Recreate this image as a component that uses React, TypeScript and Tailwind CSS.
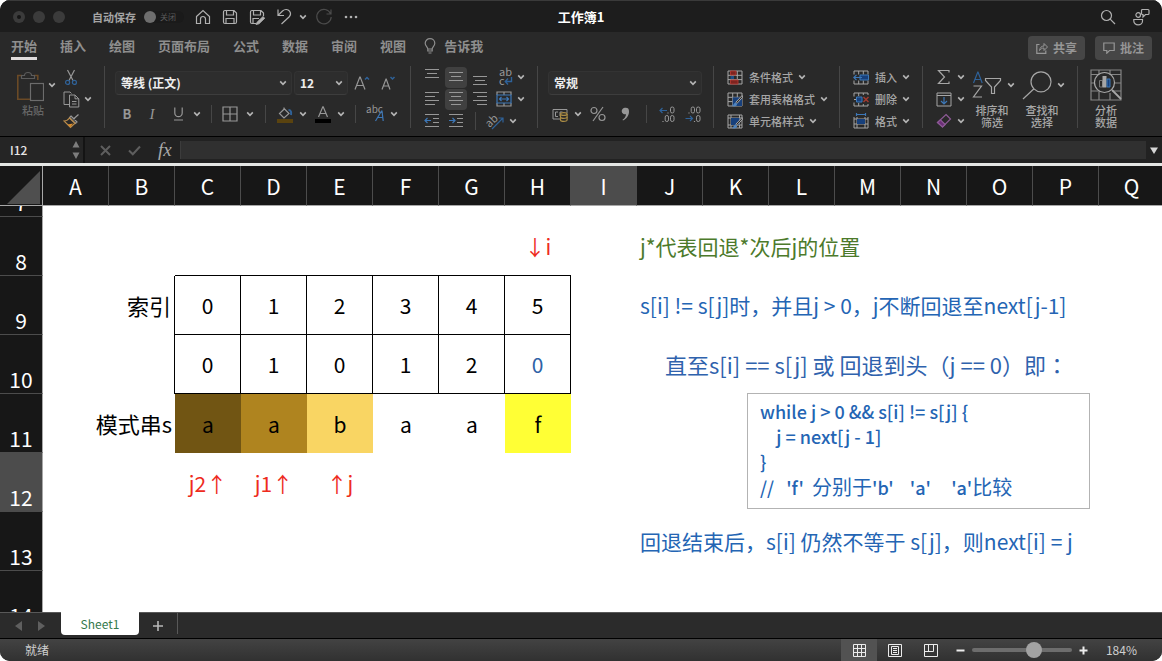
import React from "react";

type Kids = { children?: React.ReactNode; className?: string };

const BLUE = "#2f6299";

function Svg({ w, h, children, className = "" }: Kids & { w: number; h: number }) {
  return (
    <svg
      width={w}
      height={h}
      viewBox={`0 0 ${w} ${h}`}
      fill="none"
      stroke="currentColor"
      strokeWidth="1.2"
      aria-hidden="true"
      className={`shrink-0 ${className}`}
    >
      {children}
    </svg>
  );
}

function Chevron({ className = "" }: { className?: string }) {
  return (
    <Svg w={8} h={8} className={`text-[#b4b4b4] ${className}`}>
      <path d="M1.2 2.4 L4 5.4 L6.8 2.4" strokeWidth="1.6" />
    </Svg>
  );
}

function Tool({ label, children, className = "" }: Kids & { label: string }) {
  return (
    <button type="button" aria-label={label} className={`flex shrink-0 items-center justify-center ${className}`}>
      {children}
    </button>
  );
}

function Rule({ className = "" }: { className?: string }) {
  return <span className={`h-[62px] w-px shrink-0 bg-[#464646] ${className}`} />;
}

function ShortRule({ className = "" }: { className?: string }) {
  return <span className={`h-[18px] w-px shrink-0 bg-[#464646] ${className}`} />;
}

function Picker({ label, value, className = "" }: { label: string; value: string; className?: string }) {
  return (
    <label className={`relative flex h-6 shrink-0 items-center rounded border border-[#333] border-b-[#3d3d3d] bg-[#2d2d2d] ${className}`}>
      <select
        aria-label={label}
        defaultValue={value}
        className="h-full w-full appearance-none bg-transparent pl-[5px] text-[12px] leading-5 font-bold text-[#ededed] outline-none"
      >
        <option>{value}</option>
      </select>
      <Chevron className="pointer-events-none absolute right-1" />
    </label>
  );
}

/* ---------- title bar ---------- */

function TitleBar() {
  return (
    <header className="grid h-8 shrink-0 grid-cols-[1fr_auto_1fr] items-center border-t border-[#3a3a3a] bg-[#1d1d1d] text-[#b0b0b0]">
      <div className="flex items-center pl-[13px]">
        <div className="flex gap-2">
          <span className="flex size-3 items-center justify-center rounded-full bg-[#3b3b3b]">
            <span className="size-1 rounded-full bg-[#151515]" />
          </span>
          <span className="size-3 rounded-full bg-[#3b3b3b]" />
          <span className="size-3 rounded-full bg-[#3b3b3b]" />
        </div>
        <button type="button" role="switch" aria-checked="false" className="ml-[27px] flex items-center gap-2">
          <span className="text-[11px] leading-4 font-bold text-[#a4a4a4]">自动保存</span>
          <span className="flex items-center gap-1 rounded-full bg-[#1a1a1a] pr-2 text-[8px] leading-3 text-[#5a5a5a]">
            <span className="size-3 rounded-full bg-[#6e6e6e]" />
            关闭
          </span>
        </button>
        <div className="ml-[11px] flex items-center gap-[11px]">
          <Tool label="主页">
            <Svg w={16} h={16}>
              <path d="M1.5 7.5 L8 1.5 L14.5 7.5 V14.5 H10.5 V10 a2.5 2.5 0 0 0 -5 0 V14.5 H1.5 Z" />
            </Svg>
          </Tool>
          <Tool label="保存">
            <Svg w={16} h={16}>
              <path d="M1.5 3 a1.5 1.5 0 0 1 1.5 -1.5 H12 L14.5 4 V13 a1.5 1.5 0 0 1 -1.5 1.5 H3 A1.5 1.5 0 0 1 1.5 13 Z M4.5 1.5 V6 H11.5 V1.5 M4 14.5 V9.5 H12 V14.5" />
            </Svg>
          </Tool>
          <Tool label="另存为">
            <Svg w={16} h={16}>
              <path d="M7 14.5 H3 A1.5 1.5 0 0 1 1.5 13 V3 a1.5 1.5 0 0 1 1.5 -1.5 H12 L14.5 4 V7 M4.5 1.5 V6 H11.5 V1.5 M4 14.5 V9.5 H10" />
              <path d="M14 7.5 L8.2 13 L7 15.6 L10 14.8 L15.8 9.2 Z" fill="currentColor" strokeWidth="0.8" />
            </Svg>
          </Tool>
          <Tool label="撤消">
            <Svg w={16} h={17}>
              <path d="M2 1.5 V7.5 H8 M2.2 7.2 L6.5 3 C9 0.8 12 1.2 13.5 3.2 C15 5.2 14.5 7.5 13 9 L5.5 16" />
            </Svg>
          </Tool>
        </div>
        <Chevron className="ml-[7px]" />
        <Tool label="恢复" className="ml-2 text-[#4c4c4c]">
          <Svg w={18} h={18}>
            <path d="M15.5 5.5 A7.2 7.2 0 1 0 16.2 9 M16 1.5 V6 H11.5" />
          </Svg>
        </Tool>
        <Tool label="更多" className="ml-[11px]">
          <Svg w={14} h={4}>
            <g fill="currentColor" stroke="none">
              <circle cx="2" cy="2" r="1.3" />
              <circle cx="7" cy="2" r="1.3" />
              <circle cx="12" cy="2" r="1.3" />
            </g>
          </Svg>
        </Tool>
      </div>
      <h1 className="text-[13px] leading-5 font-bold text-white">工作簿1</h1>
      <div className="flex items-center justify-end gap-4 pr-3">
        <Tool label="搜索">
          <Svg w={16} h={16}>
            <circle cx="6.5" cy="6.5" r="5" />
            <path d="M10.2 10.2 L15 15" />
          </Svg>
        </Tool>
        <Tool label="共享者">
          <Svg w={18} h={18}>
            <path d="M9.5 2.5 a1 1 0 0 1 1 -1 H16 a1 1 0 0 1 1 1 V5.5 a1 1 0 0 1 -1 1 H13.5 L11 9 V6.5 H10.5 a1 1 0 0 1 -1 -1 Z" />
            <circle cx="6.2" cy="7" r="2.3" />
            <path d="M1.8 11.5 H10.5 V13 a4.3 3.8 0 0 1 -8.7 0 Z" />
          </Svg>
        </Tool>
      </div>
    </header>
  );
}

/* ---------- ribbon tabs ---------- */

const tabs = ["开始", "插入", "绘图", "页面布局", "公式", "数据", "审阅", "视图"];

function TabBar() {
  return (
    <nav className="flex h-[34px] shrink-0 items-start bg-[#292929] pr-[10px] pl-[11px] text-[13px] leading-5 font-bold text-[#8e8e8e]">
      <div className="flex gap-[23px] pt-1">
        {tabs.map((t, i) => (
          <button
            type="button"
            key={t}
            className={i === 0 ? "border-b-[3px] border-[#e0dcdc] pb-px" : "border-b-[3px] border-transparent pb-px"}
          >
            {t}
          </button>
        ))}
      </div>
      <button type="button" className="ml-[18px] flex items-center gap-2 pt-1">
        <Svg w={12} h={16}>
          <path d="M3.8 11 C3.8 9 1.2 8 1.2 5.2 A4.8 4.5 0 0 1 10.8 5.2 C10.8 8 8.2 9 8.2 11 Z M3.8 11 V13 H8.2 V11 M4.5 15 H7.5" />
        </Svg>
        告诉我
      </button>
      <div className="ml-auto flex gap-[10px] pt-1 text-[12px]">
        <button type="button" className="flex h-6 items-center gap-[5px] rounded bg-[#464646] px-2 text-[#969696]">
          <Svg w={12} h={12}>
            <path d="M3.5 2.5 H0.8 V11.4 H9.8 V8.5" />
            <path d="M3.5 8.5 C4 5.5 5.5 4 8 4 V1.5 L11.5 5 L8 8.5 V6 C6 6 5 6.8 3.5 8.5 Z" strokeWidth="1" />
          </Svg>
          共享
        </button>
        <button type="button" className="flex h-6 items-center gap-[5px] rounded bg-[#464646] px-2 text-[#969696]">
          <Svg w={12} h={12}>
            <path d="M0.8 1 H11.2 V8.5 H6.5 L3.8 11.2 V8.5 H0.8 Z" />
          </Svg>
          批注
        </button>
      </div>
    </nav>
  );
}

/* ---------- ribbon ---------- */

function Lines({ rows }: { rows: [number, number, number][] }) {
  return (
    <Svg w={16} h={16}>
      {rows.map(([x1, x2, y]) => (
        <path key={y} d={`M${x1} ${y} H${x2}`} strokeWidth="1" />
      ))}
    </Svg>
  );
}

function ClipboardGroup() {
  return (
    <section className="flex w-[77px] shrink-0 items-start">
      <button type="button" className="flex w-[34px] flex-col items-center pt-[5px] text-[11px] leading-4 font-medium text-[#666]">
        <Svg w={28} h={31} className="self-start">
          <path d="M6 4.5 H1.8 V28.2 H14 M18 4.5 H21.8 V9" stroke="#6b4a26" strokeWidth="1.6" />
          <path d="M5.5 7.5 V4.5 H8.5 C8.5 0.5 15.5 0.5 15.5 4.5 H18.5 V7.5 Z" stroke="#5c5c5c" />
          <rect x="14.5" y="12.5" width="13" height="17" stroke="#6c6c6c" fill="#292929" />
        </Svg>
        粘贴
      </button>
      <Chevron className="-ml-0.5 mt-[15px]" />
      <div className="ml-[7px] flex flex-col">
        <Tool label="剪切" className="h-[22px] w-4">
          <Svg w={14} h={17}>
            <path d="M3.5 1 L9 11.5 M10.5 1 L5 11.5" />
            <circle cx="3.6" cy="13.4" r="2" stroke={BLUE} />
            <circle cx="10.4" cy="13.4" r="2" stroke={BLUE} />
          </Svg>
        </Tool>
        <button type="button" aria-label="复制" className="flex h-[22px] items-center gap-1">
          <Svg w={17} h={17}>
            <path d="M6 13.5 H1 V1 H7 L8.5 2.5 M6.5 4 H12 L15.8 7.8 V16 H6.5 Z M12 4 V7.8 H15.8 M9 10.5 H13.5 M9 13 H13.5" strokeWidth="1" />
          </Svg>
          <Chevron />
        </button>
        <Tool label="格式刷" className="h-[22px] w-4">
          <Svg w={17} h={16}>
            <path d="M15.5 1.5 L11 5.5 M8 3 L14 9 L12.5 10.5 L6.5 4.5 Z M9 8 L12 5" />
            <path d="M6.5 5 C5 7 3 8 1 8 L7.5 14.5 L12 10.3 Z" stroke="#b88a4a" />
            <path d="M4.5 11.5 L10 10.5 L7.5 14 Z" fill="#d98c2b" stroke="none" />
          </Svg>
        </Tool>
      </div>
    </section>
  );
}

function FontGroup() {
  return (
    <section className="flex w-[283px] shrink-0 flex-col gap-[9px] pt-[5px]">
      <div className="flex items-center">
        <Picker label="字体" value="等线 (正文)" className="w-[177px]" />
        <Picker label="字号" value="12" className="ml-0.5 w-[54px]" />
        <Tool label="增大字号" className="ml-1 w-5">
          <Svg w={16} h={16}>
            <path d="M1 14.5 L5.8 2 H6.2 L11 14.5 M2.8 10.5 H9.2" />
            <path d="M11 4.5 L13 2.5 L15 4.5" stroke={BLUE} strokeWidth="1.5" />
          </Svg>
        </Tool>
        <Tool label="减小字号" className="ml-[6px] w-5">
          <Svg w={16} h={16}>
            <path d="M2 14.5 L6 4 H6.2 L10 14.5 M3.4 11 H8.8" />
            <path d="M10.5 2 L12.5 4 L14.5 2" stroke={BLUE} strokeWidth="1.5" />
          </Svg>
        </Tool>
      </div>
      <div className="flex h-5 items-center text-[14px] leading-5">
        <Tool label="加粗" className="w-6 text-[13px] font-bold">B</Tool>
        <Tool label="倾斜" className="w-[26px] font-['Liberation_Serif',serif] text-[15px] italic">I</Tool>
        <Tool label="下划线" className="w-[26px]">
          <Svg w={11} h={14}>
            <path d="M1.8 0.5 V6 a3.7 3.7 0 0 0 7.4 0 V0.5 M1 13 H10" />
          </Svg>
        </Tool>
        <Chevron className="ml-0.5" />
        <ShortRule className="mx-[10px]" />
        <button type="button" aria-label="边框" className="flex items-center gap-2">
          <Svg w={16} h={16}>
            <path d="M1 1 H15 V15 H1 Z M8 1 V15 M1 8 H15" />
          </Svg>
          <Chevron />
        </button>
        <ShortRule className="mx-[11px]" />
        <button type="button" aria-label="填充颜色" className="flex items-center gap-[6px]">
          <Svg w={16} h={17}>
            <path d="M7 1.5 V4 M7 2.5 L12 7.5 L7 12 L2.5 7.5 L7.5 2.8" />
            <path d="M11.5 4 C14 4 14.5 6 14 9" stroke={BLUE} strokeWidth="2" />
            <path d="M0 15 H16" stroke="#5a430f" strokeWidth="4" />
          </Svg>
          <Chevron />
        </button>
        <button type="button" aria-label="字体颜色" className="ml-2 flex items-center gap-[6px]">
          <Svg w={16} h={17}>
            <path d="M3.5 11 L7.8 0.8 H8.2 L12.5 11 M5 7.5 H11" />
            <path d="M0 15 H16" stroke="#000" strokeWidth="4" />
          </Svg>
          <Chevron />
        </button>
        <ShortRule className="mx-[10px]" />
        <button type="button" aria-label="拼音指南" className="flex items-center gap-[6px]">
          <span className="flex items-start text-[10px] leading-3">
            abc
            <Svg w={9} h={18} className="-ml-2 mt-1">
              <path d="M0.5 14 L6.5 4 H7 L8.2 14 M3 10.5 H8" stroke="#3d78b8" />
            </Svg>
          </span>
          <Chevron />
        </button>
      </div>
    </section>
  );
}

function AlignGroup() {
  const active = "w-[22px] h-[21px] rounded bg-[#404040]";
  const plain = "w-[22px]";
  return (
    <section className="flex w-[104px] shrink-0 flex-col">
      <div className="flex h-[22px] items-center">
        <Tool label="顶端对齐" className={plain}><Lines rows={[[1, 15, 0.5], [3, 13, 4.5], [1, 15, 8.5]]} /></Tool>
        <Tool label="垂直居中" className={`ml-[2px] ${active}`}><Lines rows={[[1, 15, 3.5], [3, 13, 7.5], [1, 15, 11.5]]} /></Tool>
        <Tool label="底端对齐" className={`ml-[2px] ${plain}`}><Lines rows={[[1, 15, 7.5], [3, 13, 11.5], [1, 15, 15.5]]} /></Tool>
        <button type="button" aria-label="自动换行" className="ml-[7px] flex items-center gap-[3px]">
          <Svg w={16} h={18} className="overflow-visible">
            <text x="1" y="8" fontSize="11" fill="currentColor" stroke="none">ab</text>
            <text x="1" y="17" fontSize="11" fill="currentColor" stroke="none">c</text>
            <path d="M13.5 9 V13.5 H7.5 M10 10.5 L7.3 13.5 L10 16.5" stroke={BLUE} strokeWidth="1.4" />
          </Svg>
          <Chevron />
        </button>
      </div>
      <div className="flex h-[22px] items-center">
        <Tool label="左对齐" className={plain}><Lines rows={[[1, 15, 1.5], [1, 11, 5.5], [1, 15, 9.5], [1, 11, 13.5]]} /></Tool>
        <Tool label="居中" className={`ml-[2px] ${active}`}><Lines rows={[[1, 15, 1.5], [3, 13, 5.5], [1, 15, 9.5], [3, 13, 13.5]]} /></Tool>
        <Tool label="右对齐" className={`ml-[2px] ${plain}`}><Lines rows={[[1, 15, 1.5], [5, 15, 5.5], [1, 15, 9.5], [5, 15, 13.5]]} /></Tool>
        <button type="button" aria-label="合并后居中" className="ml-[5px] flex items-center gap-[5px]">
          <Svg w={16} h={16}>
            <path d="M1 4 V1 H15 V4 M1 12 V15 H15 V12 M8 1 V4 M8 12 V15" />
            <path d="M1 4 H15 V12 H1 Z M3.5 8 H12.5 M5.5 6 L3.5 8 L5.5 10 M10.5 6 L12.5 8 L10.5 10" stroke="#3d78b8" />
          </Svg>
          <Chevron />
        </button>
      </div>
      <div className="flex h-[22px] items-center">
        <Tool label="减少缩进" className={plain}>
          <Svg w={16} h={16}>
            <path d="M1 1.5 H15 M9 5.5 H15 M9 9.5 H15 M1 13.5 H15" strokeWidth="1" />
            <path d="M7 7.5 H1 M3.5 5 L1 7.5 L3.5 10" stroke="#3d78b8" />
          </Svg>
        </Tool>
        <Tool label="增加缩进" className={`ml-[2px] ${plain}`}>
          <Svg w={16} h={16}>
            <path d="M1 1.5 H15 M9 5.5 H15 M9 9.5 H15 M1 13.5 H15" strokeWidth="1" />
            <path d="M1 7.5 H7 M4.5 5 L7 7.5 L4.5 10" stroke="#3d78b8" />
          </Svg>
        </Tool>
        <ShortRule className="ml-2" />
        <button type="button" aria-label="方向" className="ml-[11px] flex items-center gap-[5px]">
          <Svg w={17} h={17} className="overflow-visible">
            <text x="-2" y="12" fontSize="11" fill="currentColor" stroke="none" transform="rotate(-45 4 8)">ab</text>
            <path d="M5 16 L15.5 5.5 M11.5 5 H16 V9.5" stroke={BLUE} />
          </Svg>
          <Chevron />
        </button>
      </div>
    </section>
  );
}

function NumberGroup() {
  return (
    <section className="flex w-[154px] shrink-0 flex-col gap-[9px] pt-[5px]">
      <Picker label="数字格式" value="常规" className="w-[154px]" />
      <div className="flex h-5 items-center">
        <button type="button" aria-label="会计数字格式" className="ml-1 flex items-center gap-[6px]">
          <Svg w={16} h={15}>
            <path d="M8 12 H1 V2.5 H15 V6 M6 5 H3.5 V9.5 H6 M8 9 V5 H10.5" strokeWidth="1" />
            <g stroke="#a98b45" fill="#292929">
              <path d="M8.5 7 V13 a3.3 1.4 0 0 0 6.6 0 V7" />
              <ellipse cx="11.8" cy="7" rx="3.3" ry="1.4" />
              <path d="M8.5 10 a3.3 1.4 0 0 0 6.6 0" />
            </g>
          </Svg>
          <Chevron />
        </button>
        <Tool label="百分比" className="ml-2">
          <Svg w={16} h={16}>
            <circle cx="4" cy="4.5" r="3" />
            <circle cx="12" cy="11.5" r="3" />
            <path d="M13 1 L3 15" />
          </Svg>
        </Tool>
        <Tool label="千位分隔" className="ml-[15px]">
          <Svg w={9} h={14}>
            <path d="M4.5 0.8 A3.3 3.3 0 1 0 5 7.2 C4.8 9.5 3.5 11.5 1.5 12.8 L2 13.6 C6 11.5 8.2 8 8 4.2 A3.4 3.4 0 0 0 4.5 0.8 Z" fill="currentColor" stroke="none" />
          </Svg>
        </Tool>
        <ShortRule className="ml-4" />
        <Tool label="增加小数位数" className="ml-3">
          <Svg w={16} h={17}>
            <path d="M9 6.5 V7.5 M4 15 V16" />
            <rect x="11.5" y="1" width="3.5" height="6" rx="1.7" strokeWidth="1" />
            <rect x="6.2" y="9.5" width="3.3" height="6" rx="1.6" strokeWidth="1" />
            <rect x="11.5" y="9.5" width="3.5" height="6" rx="1.7" strokeWidth="1" />
            <path d="M8 4.5 H1 M3.5 2 L1 4.5 L3.5 7" stroke={BLUE} />
          </Svg>
        </Tool>
        <Tool label="减少小数位数" className="ml-[10px]">
          <Svg w={16} h={17}>
            <path d="M4 6.5 V7.5 M9.5 15 V16" />
            <rect x="6.2" y="1" width="3.3" height="6" rx="1.6" strokeWidth="1" />
            <rect x="11.5" y="1" width="3.5" height="6" rx="1.7" strokeWidth="1" />
            <rect x="11.5" y="9.5" width="3.5" height="6" rx="1.7" strokeWidth="1" />
            <path d="M0.5 12.5 H7.5 M5 10 L7.5 12.5 L5 15" stroke={BLUE} />
          </Svg>
        </Tool>
      </div>
    </section>
  );
}

function Row({ icon, text }: { icon: React.ReactNode; text: string }) {
  return (
    <button type="button" className="flex h-[22px] items-center text-[11px] leading-4 font-medium whitespace-nowrap text-[#a6a6a6]">
      {icon}
      <span className="mr-[5px] ml-[6px]">{text}</span>
      <Chevron />
    </button>
  );
}

const GRID = "M1 1 H15 V14 H1 Z M1 5.3 H15 M1 9.6 H15 M5.7 1 V14 M10.3 1 V14";

function StylesGroup() {
  return (
    <section className="flex w-[101px] shrink-0 flex-col items-start">
      <Row
        text="条件格式"
        icon={
          <Svg w={16} h={15}>
            <path d={GRID} strokeWidth="1" />
            <path d="M3.5 1 H9 V5 H3.5 Z M3.5 10 H11 V14 H3.5 Z" fill="#7e2420" stroke="#a93630" strokeWidth="1" />
            <path d="M3.5 6 H7 V9 H3.5 Z" fill="#1f4f86" stroke="none" />
          </Svg>
        }
      />
      <Row
        text="套用表格格式"
        icon={
          <Svg w={16} h={15}>
            <path d={GRID} strokeWidth="1" />
            <path d="M5.7 5.3 H15 V14 H5.7 Z" fill="#17407c" stroke="none" />
            <path d="M15.2 3.5 L8.8 10.2 L10 11.4 L15.8 5 Z" fill="#292929" strokeWidth="1" />
            <path d="M8.5 10.5 C6.5 11 7 13.5 4.5 14 C8 15 10.5 14 10 11.8 Z" fill="#4f83bd" stroke="none" />
          </Svg>
        }
      />
      <Row
        text="单元格样式"
        icon={
          <Svg w={16} h={15}>
            <path d="M1 1 H15 V14 H1 Z M1 4 H15 M1 11 H15 M4 1 V14 M12.5 1 V14" strokeWidth="1" />
            <path d="M4 4 H12.5 V11 H4 Z" fill="#17407c" stroke="none" />
            <path d="M15.2 3.5 L8.8 10.2 L10 11.4 L15.8 5 Z" fill="#292929" strokeWidth="1" />
            <path d="M8.5 10.5 C6.5 11 7 13.5 4.5 14 C8 15 10.5 14 10 11.8 Z" fill="#4f83bd" stroke="none" />
          </Svg>
        }
      />
    </section>
  );
}

function CellsGroup() {
  return (
    <section className="flex w-[58px] shrink-0 flex-col items-start">
      <Row
        text="插入"
        icon={
          <Svg w={16} h={15}>
            <path d="M1 4.5 V1 H15 V4.5 M1 10.5 V14 H15 V10.5 M5.7 1 V4.5 M10.3 1 V4.5 M5.7 10.5 V14 M10.3 10.5 V14" strokeWidth="1" />
            <path d="M7 5 H15.5 V10 H7 Z" fill="#17407c" stroke="#3d78b8" strokeWidth="1" />
            <path d="M9 7.5 H0.8 M3.5 4.8 L0.8 7.5 L3.5 10.2" stroke="#3d78b8" />
          </Svg>
        }
      />
      <Row
        text="删除"
        icon={
          <Svg w={16} h={15}>
            <path d="M1 4.5 V1 H15 V3 M1 10.5 V14 H15 V12 M5.7 1 V4 M10.3 1 V3 M5.7 11 V14 M10.3 12 V14 M1 7.5 H3" strokeWidth="1" />
            <path d="M3.5 5 H9 V10 H3.5 Z" fill="#17407c" stroke="#3d78b8" strokeWidth="1" />
            <path d="M10.5 5 L15.5 10 M15.5 5 L10.5 10" stroke="#a23a30" strokeWidth="1.5" />
          </Svg>
        }
      />
      <Row
        text="格式"
        icon={
          <Svg w={16} h={16}>
            <path d="M1 4 V15 H15 V4 M1 6 H15 M1 11 H15 M4 4 V15 M12 4 V15" strokeWidth="1" />
            <path d="M4 6 H12 V11 H4 Z" fill="#17407c" stroke="none" />
            <path d="M3.5 1.5 H12.5 M3.5 0 V3 M12.5 0 V3" stroke="#3d78b8" />
          </Svg>
        }
      />
    </section>
  );
}

function EditGroup() {
  return (
    <section className="flex w-[131px] shrink-0 items-start text-[11px] leading-3 font-medium text-[#a6a6a6]">
      <div className="flex flex-col">
        <button type="button" aria-label="自动求和" className="flex h-[22px] items-center gap-[5px]">
          <Svg w={16} h={16}>
            <path d="M13 3.5 V1.5 H2.5 L8.5 8 L2.5 14.5 H13 V12.5" />
          </Svg>
          <Chevron />
        </button>
        <button type="button" aria-label="填充" className="flex h-[22px] items-center gap-[5px]">
          <Svg w={16} h={15}>
            <path d="M1 1 H15 V14 H1 Z M1 3.5 H15" strokeWidth="1" />
            <path d="M8 5 V12 M5 9 L8 12 L11 9" stroke="#3d78b8" />
          </Svg>
          <Chevron />
        </button>
        <button type="button" aria-label="清除" className="flex h-[22px] items-center gap-[5px]">
          <Svg w={16} h={16}>
            <path d="M10 1.5 L14.5 6 L6.5 14 L1.5 9.5 Z" stroke="#8d5a96" />
            <path d="M4.5 6.8 L9.2 11.5 L6.5 14 L1.5 9.5 Z" fill="#6d2f78" stroke="#8d5a96" />
          </Svg>
          <Chevron />
        </button>
      </div>
      <button type="button" className="ml-[7px] flex w-10 flex-col items-center pt-[5px]">
        <span className="flex self-start">
          <Svg w={30} h={29}>
            <path d="M1.5 12 L5.8 1 H6 L10.2 12 M3 8.5 H8.8" stroke={BLUE} />
            <path d="M1.5 15 H9.5 L1.5 26 H10" />
            <path d="M13.5 7.5 H28.5 V9.5 L22.5 16 V22.5 H19.5 V16 L13.5 9.5 Z" />
          </Svg>
          <Chevron className="mt-[10px] ml-[5px]" />
        </span>
        <span className="mt-1">排序和<br />筛选</span>
      </button>
      <button type="button" className="ml-[10px] flex w-10 flex-col items-center pt-[5px]">
        <span className="flex self-start">
          <Svg w={30} h={29}>
            <circle cx="19" cy="10" r="10" strokeWidth="1.2" transform="translate(0 0.8)" />
            <path d="M12 17.8 L1 28" />
          </Svg>
          <Chevron className="mt-[10px] ml-[5px]" />
        </span>
        <span className="mt-1">查找和<br />选择</span>
      </button>
    </section>
  );
}

function AnalyzeGroup() {
  return (
    <section className="shrink-0 text-[11px] leading-3 font-medium text-[#a6a6a6]">
      <button type="button" className="flex flex-col items-center pt-[3px]">
        <Svg w={32} h={32}>
          <path d="M1 1 H31 V31 H1 Z M1 5.5 H31 M1 14 H6 M24 14 H31 M1 22 H8 M22 22 H31 M9 21 V31 M20 24 V31 M9 1 V6 M20 1 V5" strokeWidth="1.2" stroke="#858585" />
          <circle cx="14.5" cy="13.5" r="10" fill="#292929" />
          <path d="M22 21 L31 30" strokeWidth="1.8" />
          <path d="M9.5 11.5 H12.5 V18 H9.5 Z" strokeWidth="1" stroke="#777" />
          <path d="M12.5 7 H16.5 V18.5 H12.5 Z" fill="#a6a6a6" stroke="none" />
          <path d="M17 10 H20 V18 H17 Z" fill="#17407c" stroke="#3d78b8" strokeWidth="1" />
        </Svg>
        <span className="mt-[3px]">分析<br />数据</span>
      </button>
    </section>
  );
}

function Ribbon() {
  return (
    <div className="flex h-[70px] shrink-0 items-start overflow-hidden bg-[#292929] pl-4 text-[#979797]">
      <ClipboardGroup />
      <Rule className="mr-[10px] ml-[11px]" />
      <FontGroup />
      <Rule className="mr-[10px] ml-3" />
      <AlignGroup />
      <Rule className="mr-[10px] ml-3" />
      <NumberGroup />
      <Rule className="mr-[13px] ml-[11px]" />
      <StylesGroup />
      <Rule className="mr-[13px] ml-[11px]" />
      <CellsGroup />
      <Rule className="mr-[13px] ml-[11px]" />
      <EditGroup />
      <Rule className="mr-3 ml-[10px]" />
      <AnalyzeGroup />
    </div>
  );
}

/* ---------- formula bar ---------- */

function FormulaBar() {
  return (
    <div className="flex h-[27px] shrink-0 items-stretch border-t border-black bg-[#222] text-[#8a8a8a]">
      <div className="flex w-[85px] items-center justify-between border-r-2 border-[#141414] bg-[#252525] pr-[3px]">
        <input
          aria-label="名称框"
          defaultValue="I12"
          className="w-12 bg-transparent pl-[10px] text-[12px] leading-5 font-medium text-[#e6e6e6] outline-none"
        />
        <Svg w={8} h={20}>
          <path d="M4 1 L7.5 7.5 H0.5 Z M4 19 L0.5 12.5 H7.5 Z" fill="#7d7d7d" stroke="none" />
        </Svg>
      </div>
      <div className="flex items-center gap-[17px] pl-[15px]">
        <Tool label="取消">
          <Svg w={11} h={11}>
            <path d="M1 1 L10 10 M10 1 L1 10" stroke="#5e5e5e" strokeWidth="2" />
          </Svg>
        </Tool>
        <Tool label="输入">
          <Svg w={13} h={11}>
            <path d="M1 5.5 L4.8 9.3 L12 1.5" stroke="#5e5e5e" strokeWidth="2" />
          </Svg>
        </Tool>
        <Tool label="插入函数" className="font-['Liberation_Serif',serif] text-[19px] leading-5 text-[#a8a8a8] italic">
          fx
        </Tool>
      </div>
      <input aria-label="编辑栏" className="my-1 ml-2 min-w-0 flex-1 border-l border-[#3c3c3c] bg-[#303030] outline-none" />
      <Tool label="展开编辑栏" className="w-4">
        <Svg w={8} h={7}>
          <path d="M0 0.5 H8 L4 7 Z" fill="#d6d6d6" stroke="none" />
        </Svg>
      </Tool>
    </div>
  );
}

/* ---------- sheet ---------- */

const columns = "ABCDEFGHIJKLMNOPQ".split("");

const cell = "h-[59px] p-0 text-center";
const boxed = "h-[59px] border-r border-b border-black p-0 text-center";
const note = "h-[59px] p-0 pb-[2px] pl-[3px] text-left whitespace-nowrap";

function RowHead({ n, active = false }: { n: number; active?: boolean }) {
  return (
    <th
      scope="row"
      className={
        active
          ? "h-[59px] border-r border-b border-r-[#a8a8a8] border-b-[#4c4c4c] bg-[#4c4c4c] p-0 align-bottom font-normal text-white"
          : "h-[59px] border-r border-b border-r-[#a8a8a8] border-b-[#4c4c4c] bg-[#171717] p-0 align-bottom font-normal text-white"
      }
    >
      <span className="block h-[26px] leading-6">{n}</span>
    </th>
  );
}

function Sheet() {
  return (
    <main className="relative min-h-0 flex-1 overflow-hidden border-t-[3px] border-[#e4e6e4] bg-white">
      <table className="w-[1165px] table-fixed border-separate border-spacing-0 text-[21px] leading-7 text-black">
        <colgroup>
          <col className="w-[43px]" />
          {columns.map((c) => (
            <col key={c} className="w-[66px]" />
          ))}
        </colgroup>
        <thead>
          <tr>
            <th aria-label="全选" className="h-10 border-r border-b border-[#a8a8a8] bg-[#171717] p-0">
              <Svg w={42} h={38}>
                <path d="M40 4 V37 H7 Z" fill="#4f4f4f" stroke="none" />
              </Svg>
            </th>
            {columns.map((c) => (
              <th
                scope="col"
                key={c}
                className={
                  c === "I"
                    ? "h-10 border-r border-b border-r-[#4c4c4c] border-b-[#a8a8a8] bg-[#4c4c4c] p-0 font-normal text-white"
                    : "h-10 border-r border-b border-r-[#4c4c4c] border-b-[#a8a8a8] bg-[#171717] p-0 font-normal text-white"
                }
              >
                {c}
              </th>
            ))}
          </tr>
        </thead>
        <tbody>
          <tr>
            <th scope="row" className="border-r border-b border-r-[#a8a8a8] border-b-[#4c4c4c] bg-[#171717] p-0 font-normal text-white">
              <span className="flex h-[10px] items-end justify-center overflow-hidden">
                <span className="h-[26px] leading-6">7</span>
              </span>
            </th>
            <td colSpan={17} className="p-0" />
          </tr>
          <tr>
            <RowHead n={8} />
            <td colSpan={2} className={cell} />
            <td colSpan={5} className="h-[59px] border-b border-black p-0" />
            <td className="h-[59px] border-b border-black p-0 text-center text-[#ee2b1d]">↓i</td>
            <td className={cell} />
            <td colSpan={8} className={`${note} text-[#4c7a2b]`}>j*代表回退*次后j的位置</td>
          </tr>
          <tr>
            <RowHead n={9} />
            <td colSpan={2} className="h-[59px] border-r border-black p-0 pr-[3px] pb-[2px] text-right text-[22px]">索引</td>
            {["0", "1", "2", "3", "4", "5"].map((v, i) => (
              <td key={i} className={boxed}>{v}</td>
            ))}
            <td className={cell} />
            <td colSpan={8} className={`${note} text-[#2465b4]`}>s[i] != s[j]时，并且j &gt; 0，j不断回退至next[j-1]</td>
          </tr>
          <tr>
            <RowHead n={10} />
            <td colSpan={2} className="h-[59px] border-r border-black p-0" />
            {["0", "1", "0", "1", "2"].map((v, i) => (
              <td key={i} className={boxed}>{v}</td>
            ))}
            <td className={`${boxed} text-[#2f62a6]`}>0</td>
            <td className={cell} />
            <td colSpan={8} className="h-[59px] p-0 pb-[2px] pl-7 text-left text-[22px] whitespace-nowrap text-[#2f62ad]">
              直至s[i] == s[j] 或 回退到头（j == 0）即
              <span className="font-['Noto_Sans_CJK_TC',sans-serif]" lang="zh-TW">：</span>
            </td>
          </tr>
          <tr>
            <RowHead n={11} />
            <td colSpan={2} className="h-[59px] p-0 pr-[3px] pb-[2px] text-right text-[22px]">模式串s</td>
            <td className={`${cell} bg-[#715513]`}>a</td>
            <td className={`${cell} bg-[#af841f]`}>a</td>
            <td className={`${cell} bg-[#f9d563]`}>b</td>
            <td className={cell}>a</td>
            <td className={cell}>a</td>
            <td className={`${cell} bg-[#ffff35]`}>f</td>
            <td colSpan={9} className={cell} />
          </tr>
          <tr>
            <RowHead n={12} active />
            <td colSpan={2} className={cell} />
            <td className={`${cell} text-[#ee2b1d]`}>j2↑</td>
            <td className={`${cell} text-[#ee2b1d]`}>j1↑</td>
            <td className={`${cell} text-[#ee2b1d]`}>↑j</td>
            <td colSpan={12} className={cell} />
          </tr>
          <tr>
            <RowHead n={13} />
            <td colSpan={9} className={cell} />
            <td colSpan={8} className={`${note} text-[#2465b4]`}>回退结束后，s[i] 仍然不等于 s[j]，则next[i] = j</td>
          </tr>
          <tr>
            <RowHead n={14} />
            <td colSpan={17} className={cell} />
          </tr>
        </tbody>
      </table>
      <pre className="absolute top-[227px] left-[747px] h-[116px] w-[343px] border border-[#b3b3b3] bg-white px-3 py-[5px] font-['Noto_Sans_CJK_SC',sans-serif] text-[18px] leading-[25px] font-medium text-[#2465b4]">
        {"while j > 0 && s[i] != s[j] {\n    j = next[j - 1]\n}\n//   'f'  "}
        <span className="text-[20px] font-normal">分别于</span>
        {"'b'    'a'     'a'"}
        <span className="text-[20px] font-normal">比较</span>
      </pre>
    </main>
  );
}

/* ---------- bottom bars ---------- */

function SheetTabs() {
  return (
    <div className="flex h-[26px] shrink-0 items-start border-t border-[#595959] bg-[#2b2b2b] text-[#5f5f5f]">
      <div className="flex h-[25px] w-[61px] items-center gap-4 pl-[15px]">
        <Tool label="上一张">
          <Svg w={7} h={10}><path d="M7 0 V10 L0 5 Z" fill="currentColor" stroke="none" /></Svg>
        </Tool>
        <Tool label="下一张">
          <Svg w={7} h={10}><path d="M0 0 V10 L7 5 Z" fill="currentColor" stroke="none" /></Svg>
        </Tool>
      </div>
      <button type="button" className="-mt-px h-[23px] w-[78px] rounded-b-sm bg-white text-[12px] leading-5 text-[#35794c]">
        Sheet1
      </button>
      <Tool label="新建工作表" className="h-[25px] w-[38px] text-[#b8b8b8]">
        <Svg w={10} h={10}><path d="M5 0 V10 M0 5 H10" strokeWidth="1.6" /></Svg>
      </Tool>
      <span className="h-[21px] w-px bg-[#595959]" />
    </div>
  );
}

function StatusBar() {
  return (
    <footer className="flex h-[23px] shrink-0 items-center border-t border-black bg-linear-to-b from-[#434343] to-[#313131] pr-[25px] pl-[25px] text-[12px] leading-5 text-[#d0d0d0]">
      <span>就绪</span>
      <div className="ml-auto flex h-full items-center text-[#ececec]">
        <Tool label="普通" className="h-full w-9 bg-[#525252]">
          <Svg w={13} h={13}><path d="M0.5 0.5 H12.5 V12.5 H0.5 Z M0.5 4.5 H12.5 M0.5 8.5 H12.5 M4.5 0.5 V12.5 M8.5 0.5 V12.5" strokeWidth="1" /></Svg>
        </Tool>
        <Tool label="页面布局" className="h-full w-9">
          <Svg w={14} h={13}><path d="M0.5 0.5 H13.5 V12.5 H0.5 Z M3.5 2.5 H10.5 V10.5 H3.5 Z M5 4.5 H9 M5 6.5 H9 M5 8.5 H9" strokeWidth="1" /></Svg>
        </Tool>
        <Tool label="分页预览" className="h-full w-9">
          <Svg w={14} h={13}><path d="M0.5 0.5 H13.5 V12.5 H0.5 Z M4.5 0.5 V7.5 M9.5 0.5 V7.5 M0.5 7.5 H9.5" strokeWidth="1" /></Svg>
        </Tool>
        <Tool label="缩小" className="ml-[7px]">
          <Svg w={9} h={9}><path d="M0.5 4.5 H8.5" strokeWidth="2" /></Svg>
        </Tool>
        <input
          type="range"
          aria-label="缩放"
          min={0}
          max={100}
          defaultValue={64}
          className="mx-[7px] h-1 w-[100px] appearance-none rounded-full bg-[#6d6d6d] [&::-webkit-slider-thumb]:size-4 [&::-webkit-slider-thumb]:appearance-none [&::-webkit-slider-thumb]:rounded-full [&::-webkit-slider-thumb]:bg-[#a3a3a3]"
        />
        <Tool label="放大">
          <Svg w={9} h={9}><path d="M0.5 4.5 H8.5 M4.5 0.5 V8.5" strokeWidth="2" /></Svg>
        </Tool>
        <span className="ml-[17px] w-8 text-right text-[12px] text-[#cfcfcf]">184%</span>
      </div>
    </footer>
  );
}

export default function App() {
  return (
    <div className="h-screen bg-white font-['Noto_Sans_CJK_SC',sans-serif]">
      <div className="flex h-full flex-col overflow-hidden rounded-[10px] bg-[#1d1d1d]">
        <TitleBar />
        <TabBar />
        <Ribbon />
        <FormulaBar />
        <Sheet />
        <SheetTabs />
        <StatusBar />
      </div>
    </div>
  );
}
